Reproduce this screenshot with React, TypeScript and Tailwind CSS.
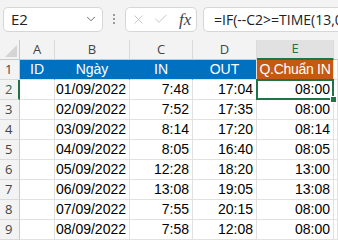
import { ChevronDown, X, Check } from "lucide-react";

const rows = [
    ["01/09/2022", "7:48", "17:04", "08:00"],
    ["02/09/2022", "7:52", "17:35", "08:00"],
    ["03/09/2022", "8:14", "17:20", "08:14"],
    ["04/09/2022", "8:05", "16:40", "08:05"],
    ["05/09/2022", "12:28", "18:20", "13:00"],
    ["06/09/2022", "13:08", "19:05", "13:08"],
    ["07/09/2022", "7:55", "20:15", "08:00"],
    ["08/09/2022", "7:58", "12:08", "08:00"],
];

const cols = "grid grid-cols-[20px_35px_75px_63px_64px_77px_1fr]";
const cell = "h-[20px] border-r border-b border-[#e1e1e1] flex items-center";

export default function App() {
    return (
        <div className="w-[338px] h-[240px] overflow-hidden bg-white font-['Liberation_Sans',sans-serif] text-[14px] text-black">
            {/* Formula bar */}
            <div className="h-[40px] bg-[#f3f3f3] flex items-center pl-[3px] pb-[2px]">
                <div className="w-[100px] h-[25px] bg-white border border-[#d6d6d6] rounded-[5px] flex items-center justify-between pl-[7px] pr-[4px] font-['Open_Sans',sans-serif] text-[15px] text-[#222]">
                    <span>E2</span>
                    <ChevronDown size={14} strokeWidth={1.5} className="text-[#555]" />
                </div>
                <div className="w-[22px] flex flex-col items-center gap-[2px]">
                    <span className="w-[2px] h-[2px] bg-[#999]" />
                    <span className="w-[2px] h-[2px] bg-[#999]" />
                    <span className="w-[2px] h-[2px] bg-[#999]" />
                </div>
                <div className="w-[72px] h-[25px] bg-white border border-[#d6d6d6] rounded-[5px] flex items-center pl-[5px] gap-[7px]">
                    <X size={15} strokeWidth={1.2} className="text-[#b5b5b5]" />
                    <Check size={16} strokeWidth={1.2} className="text-[#b5b5b5]" />
                    <span className="ml-[3px] font-['Liberation_Serif',serif] italic text-[17px] text-[#444] leading-none">fx</span>
                </div>
                <div className="ml-[6px] flex-1 h-[25px] bg-white border border-r-0 border-[#d6d6d6] rounded-l-[5px] flex items-center pl-[10px] overflow-hidden whitespace-nowrap font-['Open_Sans',sans-serif] text-[14px] text-[#222]">
                    =IF(--C2&gt;=TIME(13,0,
                </div>
            </div>

            {/* Column headers */}
            <div className={`${cols} bg-[#f3f3f3] text-[#444] font-['Open_Sans',sans-serif] text-[13px]`}>
                <div className="h-[20px] border-r border-b border-[#c8c8c8] relative">
                    <div className="absolute right-[2px] bottom-[2px] w-0 h-0 border-l-[12px] border-l-transparent border-b-[12px] border-b-[#d4d4d4]" />
                </div>
                {["A", "B", "C", "D"].map((c) => (
                    <div key={c} className="h-[20px] border-r border-b border-[#c8c8c8] border-r-[#dadada] flex items-center justify-center">
                        {c}
                    </div>
                ))}
                <div className="h-[20px] bg-[#e1e1e1] border-r border-r-[#dadada] border-b-2 border-b-[#217346] flex items-center justify-center text-[#217346]">
                    E
                </div>
                <div className="h-[20px] border-b border-[#c8c8c8]" />
            </div>

            {/* Header row */}
            <div className={cols}>
                <div className="h-[20px] bg-[#f3f3f3] border-r border-b border-[#c8c8c8] border-b-[#dadada] flex items-center pl-[5px] text-[#444] font-['Open_Sans',sans-serif] text-[13px]">1</div>
                <div className="h-[20px] bg-[#0070c0] border-r border-b border-[#0070c0] border-b-[#e1e1e1] flex items-center justify-center text-white">ID</div>
                <div className="h-[20px] bg-[#0070c0] border-r border-b border-[#0070c0] border-b-[#e1e1e1] flex items-center justify-center text-white">Ngày</div>
                <div className="h-[20px] bg-[#0070c0] border-r border-b border-[#0070c0] border-b-[#e1e1e1] flex items-center justify-center text-white">IN</div>
                <div className="h-[20px] bg-[#0070c0] border-r border-b border-[#e1e1e1] flex items-center justify-center text-white">OUT</div>
                <div className="h-[20px] bg-[#c65911] border-r border-b border-[#e1e1e1] flex items-center justify-center text-white whitespace-nowrap tracking-[-0.3px]">Q.Chuẩn IN</div>
                <div className={cell} />
            </div>

            {/* Data rows */}
            {rows.map((r, i) => {
                const selected = i === 0;
                return (
                    <div key={i} className={`${cols} ${selected ? "relative z-10" : ""}`}>
                        <div
                            className={`h-[20px] bg-[#f3f3f3] border-b border-[#dadada] flex items-center pl-[5px] font-['Open_Sans',sans-serif] text-[13px] ${
                                selected ? "border-r-2 border-r-[#217346] text-[#217346]" : "border-r border-r-[#c8c8c8] text-[#444]"
                            }`}
                        >
                            {i + 2}
                        </div>
                        <div className={cell} />
                        <div className={`${cell} justify-end pr-[3px]`}>{r[0]}</div>
                        <div className={`${cell} justify-end pr-[3px]`}>{r[1]}</div>
                        <div className={`${cell} justify-end pr-[3px]`}>{r[2]}</div>
                        <div className={`${cell} justify-end pr-[3px] relative`}>
                            {r[3]}
                            {selected && (
                                <>
                                    <div className="absolute -left-[1px] -top-[1px] -right-[1px] -bottom-[1px] border-2 border-[#217346]" />
                                    <div className="absolute -right-[4px] -bottom-[4px] w-[7px] h-[7px] bg-[#217346] border border-white" />
                                </>
                            )}
                        </div>
                        <div className={cell} />
                    </div>
                );
            })}
        </div>
    );
}
